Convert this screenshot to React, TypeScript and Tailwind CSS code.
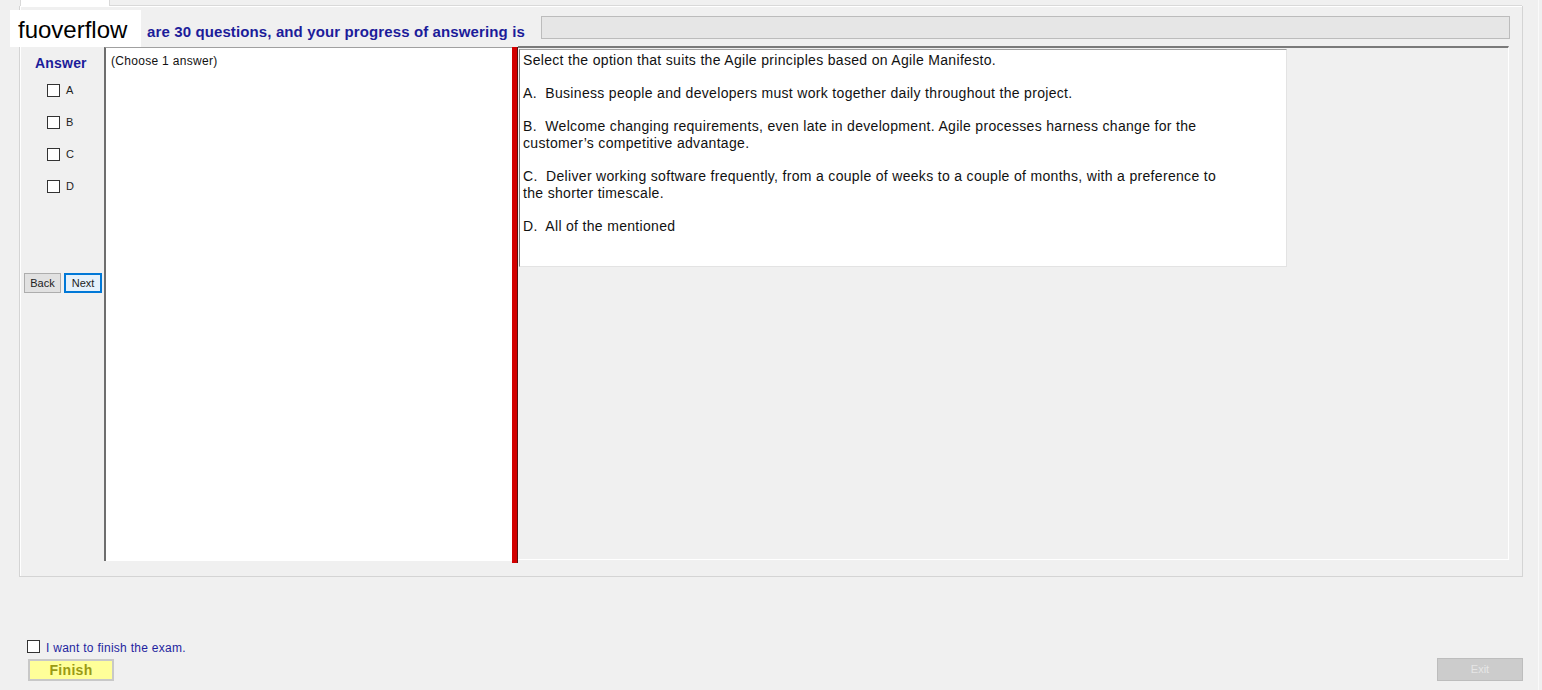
import React from "react";

const Box = () => (
  <span className="inline-block w-[13px] h-[13px] bg-white border border-[#333333]" />
);

export default function App() {
  const opts = ["A", "B", "C", "D"];
  return (
    <div className="relative w-[1542px] h-[690px] bg-[#f0f0f0] overflow-hidden font-['Liberation_Sans',Arial,sans-serif]">
      {/* top tab strip */}
      <div className="h-[6px] flex">
        <div className="ml-[20px] w-[90px] h-[6px] bg-white border-x border-[#d9d9d9]" />
        <div className="flex-1 mr-[20px] border-b border-[#d9d9d9] h-[6px]" />
      </div>
      {/* group box */}
      <div className="ml-[19px] w-[1504px] h-[571px] border border-[#d4d4d4] border-t-0 shadow-[inset_1px_1px_0_#ffffff] flex flex-col">
        {/* header */}
        <div className="h-[40px] flex items-start">
          <div className="ml-[127px] mt-[17px] w-[394px] whitespace-nowrap text-[15px] leading-[18px] font-bold text-[#1c1c9a] tracking-[0.12px]">
            are 30 questions, and your progress of answering is
          </div>
          <div className="mt-[10px] w-[969px] h-[23px] bg-[#e6e6e6] border border-[#bcbcbc]" />
        </div>
        {/* content */}
        <div className="flex h-[516px] pl-[3px]">
          {/* left column */}
          <div className="w-[81px] flex flex-col">
            <div className="mt-[9px] pl-[12px] text-[14px] leading-[16px] font-bold text-[#1c1c9a] tracking-[0.2px]">Answer</div>
            <div className="mt-[13px] flex flex-col gap-[19px] pl-[24px]">
              {opts.map((o) => (
                <div key={o} className="flex items-center gap-[6px] h-[13px]">
                  <Box />
                  <span className="text-[11px] text-[#222222] leading-[13px]">{o}</span>
                </div>
              ))}
            </div>
            <div className="mt-[80px] flex gap-[3px] pl-[1px]">
              <button className="w-[37px] h-[20px] bg-[#e1e1e1] border border-[#adadad] text-[11px] text-[#222222] leading-none">Back</button>
              <button className="w-[38px] h-[20px] bg-[#e5f1fb] border-2 border-[#0078d7] text-[11px] text-[#222222] leading-none">Next</button>
            </div>
          </div>
          {/* middle */}
          <div className="w-[408px] h-[514px] mt-[1px] bg-white border-l-2 border-l-[#6e6e6e] border-t border-t-[#a0a0a0] pl-[5px] pt-[6px]">
            <div className="text-[12px] leading-[14px] text-[#111111] tracking-[0.3px]">(Choose 1 answer)</div>
          </div>
          {/* splitter */}
          <div className="w-[6px] h-[516px] mt-[1px] bg-[#d20000] border-r border-r-[#5a1010]" />
          {/* right */}
          <div className="w-[991px] h-[514px] border-t-2 border-t-[#7a7a7a] border-r border-r-[#ffffff] border-b border-b-[#ffffff] pl-[1px] pt-[1px]">
            <div className="w-[768px] h-[218px] bg-white border-l border-l-[#7a7a7a] border-t border-t-[#a0a0a0] border-r border-r-[#e3e3e3] border-b border-b-[#e3e3e3] pl-[3px] pt-[2px] text-[14px] leading-[16.6px] text-[#111111] tracking-[0.32px] whitespace-nowrap">
              <div>Select the option that suits the Agile principles based on Agile Manifesto.</div>
              <div className="h-[16.6px]" />
              <div>A.&nbsp; Business people and developers must work together daily throughout the project.</div>
              <div className="h-[16.6px]" />
              <div>B.&nbsp; Welcome changing requirements, even late in development. Agile processes harness change for the</div>
              <div>customer’s competitive advantage.</div>
              <div className="h-[16.6px]" />
              <div>C.&nbsp; Deliver working software frequently, from a couple of weeks to a couple of months, with a preference to</div>
              <div>the shorter timescale.</div>
              <div className="h-[16.6px]" />
              <div>D.&nbsp; All of the mentioned</div>
            </div>
          </div>
        </div>
      </div>

      {/* bottom */}
      <div className="mt-[63px] ml-[27px] flex items-center gap-[6px] h-[13px]">
        <Box />
        <span className="text-[12px] leading-[14px] text-[#1f1f9f] mt-[2px] tracking-[0.27px]">I want to finish the exam.</span>
      </div>
      <div className="flex items-start justify-between mt-[6px]">
        <button className="ml-[28px] w-[86px] h-[22px] bg-[#ffff99] border-2 border-[#c8c8c8] text-[14px] font-bold text-[#9a9a14] leading-none tracking-[0.3px]">Finish</button>
        <button className="mr-[19px] -mt-[1px] w-[86px] h-[23px] bg-[#cccccc] border border-[#bdbdbd] text-[11px] text-[#e6e6e6] leading-none">Exit</button>
      </div>

      {/* window right edge */}
      <div className="absolute top-0 right-[3px] w-px h-full bg-[#fafafa]" />

      {/* watermark */}
      <div className="absolute left-[10px] top-[10px] w-[131px] h-[37px] bg-white flex items-end pb-[5px] pl-[8px] text-[24px] text-black leading-none font-['Liberation_Sans',Arial,sans-serif]">
        fuoverflow
      </div>
    </div>
  );
}
